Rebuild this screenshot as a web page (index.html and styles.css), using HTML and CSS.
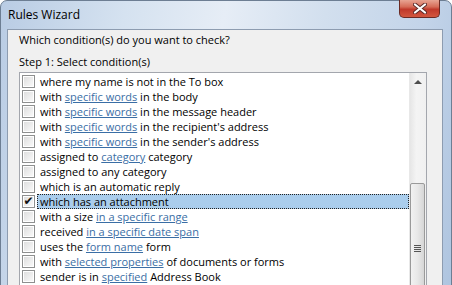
FILE: index.html
```html
<html>
  <head>
    <meta charset="utf-8">
    <title>Rules Wizard</title>
    <link rel="stylesheet" href="styles.css">
  </head>
<body>

<div class="window">
  <div class="titlebar">
    <span class="title">Rules Wizard</span>
    <div class="close-btn">
      <svg width="14" height="11" viewBox="0 0 14 11">
        <path d="M2 1.5 L12 9.5 M12 1.5 L2 9.5" stroke="#5b2a28" stroke-width="4" stroke-linecap="round"/>
        <path d="M2 1.5 L12 9.5 M12 1.5 L2 9.5" stroke="#fff" stroke-width="2.2" stroke-linecap="round"/>
      </svg>
    </div>
  </div>

  <div class="client">
    <p class="question">Which condition(s) do you want to check?</p>
    <p class="step">Step 1: Select condition(s)</p>

    <div class="listbox">
      <ul class="conditions">
        <li><span class="box"></span><span class="label">where my name is not in the To box</span></li>
        <li><span class="box"></span><span class="label">with <a>specific words</a> in the body</span></li>
        <li><span class="box"></span><span class="label">with <a>specific words</a> in the message header</span></li>
        <li><span class="box"></span><span class="label">with <a>specific words</a> in the recipient's address</span></li>
        <li><span class="box"></span><span class="label">with <a>specific words</a> in the sender's address</span></li>
        <li><span class="box"></span><span class="label">assigned to <a>category</a> category</span></li>
        <li><span class="box"></span><span class="label">assigned to any category</span></li>
        <li><span class="box"></span><span class="label">which is an automatic reply</span></li>
        <li class="selected"><span class="box checked">&#10004;</span><span class="label">which has an attachment</span></li>
        <li><span class="box"></span><span class="label">with a size <a>in a specific range</a></span></li>
        <li><span class="box"></span><span class="label">received <a>in a specific date span</a></span></li>
        <li><span class="box"></span><span class="label">uses the <a>form name</a> form</span></li>
        <li><span class="box"></span><span class="label">with <a>selected properties</a> of documents or forms</span></li>
        <li><span class="box"></span><span class="label">sender is in <a>specified</a> Address Book</span></li>
      </ul>
      <div class="scrollbar">
        <div class="arrow-btn"><span class="arrow-up"></span></div>
        <div class="thumb"><span class="grip"></span></div>
      </div>
    </div>
  </div>
</div>

</body></html>
```

FILE: styles.css
```css
* {
  box-sizing: border-box;
}

html, body {
  margin: 0;
  height: 100%;
  overflow: hidden;
}

body {
  font-family: "Open Sans", "Noto Sans", sans-serif;
  font-size: 11px;
  color: #000;
  background: #fff;
}

.window {
  width: 452px;
  height: 300px;
  padding: 0 8px 0 6px;
  border-radius: 7px 7px 0 0;
  border: 1px solid #6d7e93;
  background: linear-gradient(100deg, #b9cce4 0%, #d5e2f0 25%, #e6edf6 45%, #d2dfee 65%, #c3d4e9 85%, #aec4df 100%);
}

.titlebar {
  height: 28px;
  display: flex;
  align-items: flex-start;
  justify-content: space-between;
}

.title {
  padding: 5px 0 0 1px;
  font-size: 12px;
  color: #000;
}

.close-btn {
  width: 41px;
  height: 18px;
  margin-top: -1px;
  margin-right: 3px;
  display: flex;
  align-items: center;
  justify-content: center;
  border: 1px solid #6b2a24;
  border-top: none;
  border-radius: 0 0 5px 5px;
  background: linear-gradient(#e8a493 0%, #d66c58 40%, #c0392b 55%, #d2573f 100%);
}

.client {
  height: 272px;
  padding: 2px 15px 0 11px;
  border: 1px solid #8d9cb0;
  background: #f0f0f0;
}

.question {
  margin: 0;
  height: 22px;
  line-height: 15px;
}

.step {
  margin: 0;
  height: 18px;
  line-height: 15px;
}

.listbox {
  display: flex;
  height: 240px;
  border: 1px solid #a3a6ad;
  background: #fff;
}

.conditions {
  flex: 1;
  list-style: none;
  margin: 0;
  padding: 1px 0 0 2px;
}

.conditions li {
  height: 15px;
  display: flex;
  align-items: center;
  white-space: nowrap;
}

.box {
  width: 13px;
  height: 13px;
  margin-right: 2px;
  border: 1px solid #8e8f8f;
  background: linear-gradient(135deg, #dcdcdc, #fbfbfb);
  box-shadow: inset 0 0 0 1px #fff;
  font-size: 12px;
  line-height: 11px;
  text-align: center;
}

.box.checked {
  font-family: "DejaVu Sans", sans-serif;
  font-size: 12px;
  font-weight: bold;
  color: #111;
}

.label {
  flex: 1;
  height: 15px;
  line-height: 14px;
  padding-left: 2px;
  border: 1px dotted transparent;
}

.selected .label {
  background: #aacdec;
  border-color: #222;
}

.label a {
  color: #3a6ea5;
  text-decoration: underline;
}

.scrollbar {
  width: 17px;
  background: linear-gradient(to right, #e6e6e6, #f4f4f4 40%, #f0f0f0);
  border-left: 1px solid #e8e8e8;
}

.arrow-btn {
  height: 17px;
  display: flex;
  align-items: center;
  justify-content: center;
}

.arrow-up {
  width: 0;
  height: 0;
  border-left: 4px solid transparent;
  border-right: 4px solid transparent;
  border-bottom: 4px solid #4d4d4d;
}

.thumb {
  margin: 93px 1px 0 0;
  height: 140px;
  display: flex;
  align-items: flex-start;
  justify-content: center;
  padding-top: 61px;
  border: 1px solid #9a9a9a;
  border-radius: 2px;
  background: linear-gradient(to right, #f2f2f2, #e8e8e8 50%, #d6d6d6);
}

.grip {
  width: 7px;
  height: 7px;
  background: repeating-linear-gradient(#555 0, #555 1px, transparent 1px, transparent 2px);
}
```
